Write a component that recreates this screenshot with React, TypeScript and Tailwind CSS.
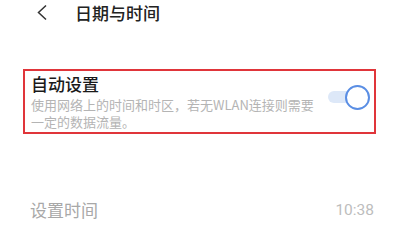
export default function App() {
  const font = { fontFamily: '"Noto Sans CJK SC", "Noto Sans", sans-serif' };
  return (
    <div className="w-[412px] h-[250px] bg-white overflow-hidden" style={font}>
      {/* header */}
      <div className="flex items-center h-[24px] pl-[36px]">
        <svg width="12" height="17" viewBox="0 0 12 17" className="shrink-0">
          <path d="M10 1.5 L2.5 8.5 L10 15.5" fill="none" stroke="#333" strokeWidth="1.5" strokeLinejoin="miter" />
        </svg>
        <span className="ml-[27px] text-[17px] leading-none font-medium text-[#222]">日期与时间</span>
      </div>

      {/* auto setting row */}
      <div className="mt-[45px] ml-[23px] mr-[36px] h-[65px] border-[2.5px] border-[#e0353a] flex items-center pl-[6px] pr-[9px]">
        <div className="flex-1 flex flex-col">
          <span className="text-[17px] leading-[22px] text-[#1a1a1a] font-medium">自动设置</span>
          <span className="text-[13px] leading-[17px] text-[#b4b4b4] mt-[1px]">
            使用网络上的时间和时区，若无WLAN连接则需要
            <br />
            一定的数据流量。
          </span>
        </div>
      </div>

      {/* toggle overlay */}
      <div className="relative">
        <div className="absolute left-[328px] top-[-43px] w-[40px] h-[12px] rounded-full bg-[#dde8f8]" />
        <div className="absolute left-[345px] top-[-49px] w-[25px] h-[25px] rounded-full bg-white border-[2.5px] border-[#5a8ee4]" />
      </div>

      {/* set time row */}
      <div className="mt-[66px] flex items-center justify-between pl-[30px] pr-[38px]">
        <span className="text-[17px] leading-[20px] text-[#a8a8a8]">设置时间</span>
        <span className="text-[15.5px] leading-[20px] text-[#bdbdbd]" style={{ fontFamily: '"Roboto", "Noto Sans", sans-serif' }}>10:38</span>
      </div>
    </div>
  );
}
